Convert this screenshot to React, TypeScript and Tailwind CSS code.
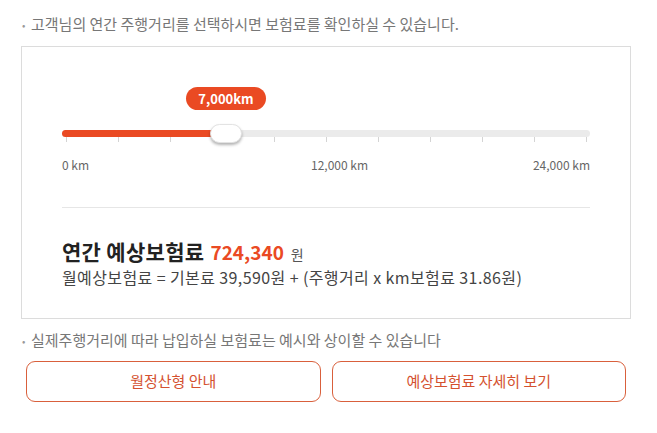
import React from "react";

const ticks = Array.from({ length: 11 });

export default function App() {
  return (
    <div
      className="w-[657px] h-[433px] bg-white pl-[21px] pt-[14px]"
      style={{ fontFamily: '"Noto Sans CJK KR", "Noto Sans", sans-serif' }}
    >
      <div className="w-[610px]">
        <p className="flex items-center h-[20px] text-[15px] text-[#777]">
          <span className="w-[10px] text-[10px] text-[#999] pl-[1px]">•</span>
          <span>고객님의 연간 주행거리를 선택하시면 보험료를 확인하실 수 있습니다.</span>
        </p>
        <div className="mt-[12px] border border-[#dcdcdc] h-[273px] px-[40px] pt-[40px]">
          <div className="relative h-[57px]">
            <div className="absolute left-[124px] top-0 w-[80px] h-[23px] rounded-full bg-[#ea4a23] text-white text-[13px] font-bold flex items-center justify-center">
              7,000km
            </div>
            <div className="absolute left-0 right-0 top-[43px] h-[7px] rounded-full bg-[#ebebeb]">
              <div className="h-full w-[164px] rounded-full bg-[#ea4a23]" />
            </div>
            <div className="absolute left-[4px] right-[3px] top-[50px] h-[5px] flex justify-between">
              {ticks.map((_, i) => (
                <div key={i} className="w-px h-[5px] bg-[#d4d4d4]" />
              ))}
            </div>
            <div className="absolute left-[148px] top-[37px] w-[32px] h-[19px] rounded-full bg-white border border-[#e3e3e3] shadow-[0_2px_3px_rgba(0,0,0,0.3)]" />
          </div>
          <div className="relative h-[18px] mt-[12px] text-[12px] text-[#666]">
            <span className="absolute left-0 top-0 leading-[18px]">0 km</span>
            <span className="absolute left-[249px] top-0 leading-[18px]">12,000 km</span>
            <span className="absolute right-0 top-0 leading-[18px]">24,000 km</span>
          </div>
          <div className="mt-[33px] h-px bg-[#e6e6e6]" />
          <div className="mt-[28px] flex items-baseline text-[#222] leading-[30px]">
            <span className="text-[21px] font-bold tracking-[0.3px]">연간 예상보험료</span>
            <span className="ml-[6px] text-[19px] font-bold text-[#ea4a23]">724,340</span>
            <span className="ml-[7px] text-[14px] text-[#555]">원</span>
          </div>
          <div className="-mt-[3px] text-[16px] text-[#444] leading-[22px] tracking-[0.4px]">
            월예상보험료 = 기본료 39,590원 + (주행거리 x km보험료 31.86원)
          </div>
        </div>
        <p className="mt-[11px] flex items-center h-[20px] text-[15px] text-[#777]">
          <span className="w-[10px] text-[10px] text-[#999] pl-[1px]">•</span>
          <span>실제주행거리에 따라 납입하실 보험료는 예시와 상이할 수 있습니다</span>
        </p>
        <div className="mt-[11px] mx-[5px] flex gap-[11px]">
          <button className="flex-1 h-[41px] rounded-[9px] border border-[#d9603c] text-[15px] text-[#d4512f] bg-white">
            월정산형 안내
          </button>
          <button className="flex-1 h-[41px] rounded-[9px] border border-[#d9603c] text-[15px] text-[#d4512f] bg-white">
            예상보험료 자세히 보기
          </button>
        </div>
      </div>
    </div>
  );
}
